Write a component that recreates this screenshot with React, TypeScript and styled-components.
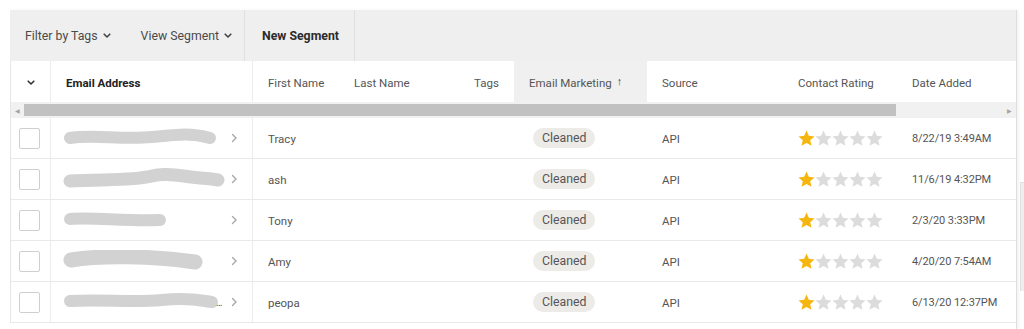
import React from "react";
import styled, { createGlobalStyle } from "styled-components";

const Global = createGlobalStyle`
  html, body { margin: 0; padding: 0; background: #fff; }
  body { font-family: Roboto, "Liberation Sans", Arial, sans-serif; color: #555; }
`;

const COLS = "40px 202px 86px 100px 75px 133px 136px 114px 1fr";

const Page = styled.div`
  display: flex;
  padding: 10px 0 0 10px;
  width: 1024px;
  height: 329px;
  box-sizing: border-box;
  overflow: hidden;
`;

const Main = styled.div`
  width: 1006px;
  display: flex;
  flex-direction: column;
  border-right: 1px solid #dedede;
  box-shadow: 2px 0 3px rgba(0, 0, 0, 0.05);
`;

const Side = styled.div`
  flex: 1;
  display: flex;
  flex-direction: column;
  padding-top: 172px;
  padding-left: 3px;
`;

const SidePanel = styled.div`
  height: 108px;
  background: #eeeeee;
  border-top: 1px solid #e2e2e2;
  border-left: 1px solid #e2e2e2;
`;

const Toolbar = styled.div`
  display: flex;
  align-items: stretch;
  height: 51px;
  background: #efefef;
`;

const ToolGroup = styled.div`
  display: flex;
  align-items: center;
  gap: 30px;
  padding-left: 15px;
  width: 235px;
  box-sizing: border-box;
  border-right: 1px solid #e0e0e0;
`;

const ToolItem = styled.div`
  display: flex;
  align-items: center;
  gap: 5px;
  font-size: 12.3px;
  color: #4a4a4a;
  white-space: nowrap;
  padding-top: 1px;
`;

const ToolButton = styled.div`
  display: flex;
  align-items: center;
  padding: 1px 0 0 17px;
  width: 110px;
  box-sizing: border-box;
  font-size: 12.3px;
  font-weight: 700;
  color: #2b2b2b;
  white-space: nowrap;
  border-right: 1px solid #e0e0e0;
`;

const Grid = styled.div`
  display: grid;
  grid-template-columns: ${COLS};
  border-left: 1px solid #e6e6e6;
`;

const HeadCell = styled.div<{ $active?: boolean; $bold?: boolean; $right?: boolean; $line?: boolean; $center?: boolean }>`
  height: 41px;
  display: flex;
  align-items: center;
  justify-content: ${(p) => (p.$center ? "center" : p.$right ? "flex-end" : "flex-start")};
  padding: 2px 15px 0;
  box-sizing: border-box;
  font-size: 11.5px;
  white-space: nowrap;
  background: ${(p) => (p.$active ? "#f0f0f0" : "#fff")};
  font-weight: ${(p) => (p.$bold ? 700 : 400)};
  color: ${(p) => (p.$bold ? "#222" : "#555")};
  border-right: ${(p) => (p.$line ? "1px solid #ececec" : "none")};
  gap: 5px;
`;

const SortArrow = styled.span`
  font-size: 11px;
  color: #444;
  margin-top: -2px;
`;

const Scroll = styled.div`
  height: 16px;
  display: flex;
  align-items: center;
  background: #f1f1f1;
  border-left: 1px solid #e6e6e6;
`;

const Arrow = styled.div`
  width: 13px;
  display: flex;
  justify-content: center;
  font-size: 6px;
  color: #a3a3a3;
`;

const Track = styled.div`
  flex: 1;
  height: 16px;
  display: flex;
  align-items: center;
`;

const Thumb = styled.div`
  width: 872px;
  height: 12px;
  background: #c1c1c1;
`;

const Cell = styled.div<{ $line?: boolean; $center?: boolean }>`
  height: 41px;
  border-bottom: 1px solid #e9e9e9;
  border-right: ${(p) => (p.$line ? "1px solid #ececec" : "none")};
  display: flex;
  align-items: center;
  justify-content: ${(p) => (p.$center ? "center" : "flex-start")};
  padding: 1px 15px 0;
  box-sizing: border-box;
  font-size: 11.5px;
  color: #555;
  white-space: nowrap;
  overflow: hidden;
`;

const DateCell = styled(Cell)`
  font-size: 11px;
  letter-spacing: -0.1px;
`;

const CheckCell = styled(Cell)`
  padding: 0 0 0 8px;
  border-right: 1px solid #ececec;
`;

const EmailCell = styled(Cell)`
  padding: 0 14px 0 11px;
  border-right: 1px solid #ececec;
  justify-content: space-between;
`;

const Box = styled.div`
  width: 19px;
  height: 19px;
  border: 1px solid #cfcfcf;
  border-radius: 2px;
  background: #fff;
`;

const Pill = styled.span`
  display: inline-flex;
  align-items: center;
  height: 20px;
  padding: 0 9px;
  border-radius: 10px;
  background: #edebe8;
  font-size: 12.3px;
  color: #555;
  margin: -1px 0 0 4px;
`;

const Stars = styled.div`
  display: flex;
  margin-top: -1px;
`;

const Blur = styled.div`
  display: flex;
  align-items: center;
`;

const Ellipsis = styled.span`
  font-size: 11px;
  color: #666;
  margin-left: -4px;
  letter-spacing: -1px;
`;

const Chevron = ({ size = 8, color = "#444", w = 2 }: { size?: number; color?: string; w?: number }) => (
  <svg width={size} height={size * 0.7} viewBox="0 0 10 7">
    <path d="M1.5 1.5 L5 5 L8.5 1.5" fill="none" stroke={color} strokeWidth={w} strokeLinecap="round" strokeLinejoin="round" />
  </svg>
);

const RightChev = () => (
  <svg width="7" height="10" viewBox="0 0 7 10">
    <path d="M1.5 1.5 L5 5 L1.5 8.5" fill="none" stroke="#a8a8a8" strokeWidth="1.4" strokeLinecap="round" />
  </svg>
);

const Star = ({ on }: { on: boolean }) => (
  <svg width="17" height="17" viewBox="1 1 22 22">
    <path
      d="M12 1.8 L15 8.6 L22.4 9.3 L16.8 14.2 L18.5 21.5 L12 17.7 L5.5 21.5 L7.2 14.2 L1.6 9.3 L9 8.6 Z"
      fill={on ? "#f5b60f" : "#dcdcdc"}
    />
  </svg>
);

const blobs = [
  { w: 156, d: "M8 11 C30 7, 60 13, 90 10 S130 6, 148 11", sw: 12 },
  { w: 164, d: "M8 13 C40 11, 70 13, 90 8 C105 4, 120 9, 150 11 L156 12", sw: 13 },
  { w: 106, d: "M8 10 C30 8, 60 12, 98 11", sw: 12 },
  { w: 142, d: "M9 10 C40 5, 90 6, 133 12", sw: 15 },
  { w: 158, d: "M8 10 C40 8, 70 12, 100 9 S140 10, 150 11", sw: 12 },
];

const Blob = ({ w, d, sw }: { w: number; d: string; sw: number }) => (
  <svg width={w} height="22" viewBox={`0 0 ${w} 22`}>
    <path d={d} fill="none" stroke="#d2d2d2" strokeWidth={sw} strokeLinecap="round" />
  </svg>
);

const rows = [
  { name: "Tracy", date: "8/22/19 3:49AM" },
  { name: "ash", date: "11/6/19 4:32PM" },
  { name: "Tony", date: "2/3/20 3:33PM" },
  { name: "Amy", date: "4/20/20 7:54AM" },
  { name: "peopa", date: "6/13/20 12:37PM" },
];

export default function App() {
  return (
    <>
      <Global />
      <Page>
        <Main>
          <Toolbar>
            <ToolGroup>
              <ToolItem>
                Filter by Tags <Chevron />
              </ToolItem>
              <ToolItem>
                View Segment <Chevron />
              </ToolItem>
            </ToolGroup>
            <ToolButton>New Segment</ToolButton>
          </Toolbar>
          <Grid>
            <HeadCell $center $line>
              <Chevron size={8} color="#333" />
            </HeadCell>
            <HeadCell $bold $line>Email Address</HeadCell>
            <HeadCell>First Name</HeadCell>
            <HeadCell>Last Name</HeadCell>
            <HeadCell $right>Tags</HeadCell>
            <HeadCell $active>
              Email Marketing <SortArrow>↑</SortArrow>
            </HeadCell>
            <HeadCell>Source</HeadCell>
            <HeadCell>Contact Rating</HeadCell>
            <HeadCell>Date Added</HeadCell>
          </Grid>
          <Scroll>
            <Arrow>◀</Arrow>
            <Track>
              <Thumb />
            </Track>
            <Arrow>▶</Arrow>
          </Scroll>
          <Grid>
            {rows.map((r, i) => (
              <React.Fragment key={i}>
                <CheckCell>
                  <Box />
                </CheckCell>
                <EmailCell>
                  <Blur>
                    <Blob {...blobs[i]} />
                    {i === 4 && <Ellipsis>...</Ellipsis>}
                  </Blur>
                  <RightChev />
                </EmailCell>
                <Cell>{r.name}</Cell>
                <Cell />
                <Cell />
                <Cell>
                  <Pill>Cleaned</Pill>
                </Cell>
                <Cell>API</Cell>
                <Cell>
                  <Stars>
                    {[0, 1, 2, 3, 4].map((s) => (
                      <Star key={s} on={s === 0} />
                    ))}
                  </Stars>
                </Cell>
                <DateCell>{r.date}</DateCell>
              </React.Fragment>
            ))}
          </Grid>
        </Main>
        <Side>
          <SidePanel />
        </Side>
      </Page>
    </>
  );
}
